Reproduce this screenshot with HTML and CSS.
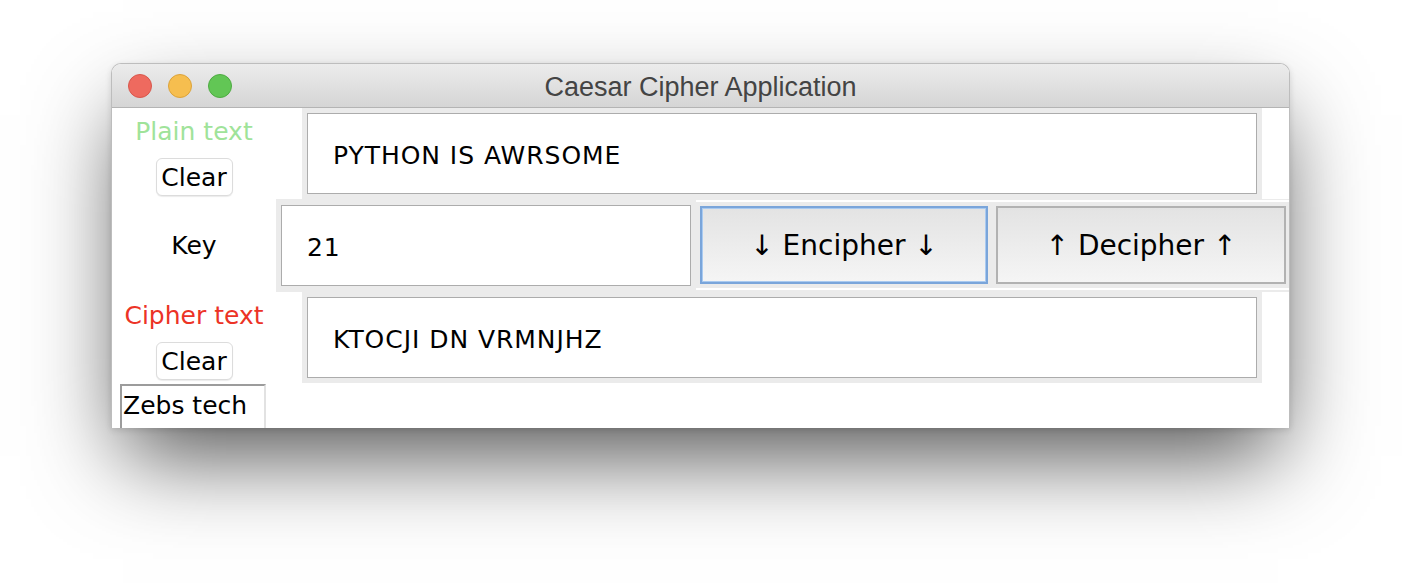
FILE: index.html
```html
<!DOCTYPE html>
<html lang="en">
<head>
    <meta charset="UTF-8">
    <title>Caesar Cipher Application</title>
    <link rel="stylesheet" href="styles.css">
</head>
<body>
    <div class="window">
        <!-- thanh tieu de -->
        <div class="titlebar">
            <div class="lights">
                <span class="light red"></span>
                <span class="light yellow"></span>
                <span class="light green"></span>
            </div>
            <div class="title">Caesar Cipher Application</div>
            <div></div>
        </div>

        <div class="content">
            <div class="row">
                <div class="side">
                    <div class="label plain">Plain text</div>
                    <button class="clear">Clear</button>
                </div>
                <div class="frame wide">
                    <div class="entry">PYTHON IS AWRSOME</div>
                </div>
            </div>

            <div class="row">
                <div class="side center">
                    <div class="label">Key</div>
                </div>
                <div class="frame key">
                    <div class="entry">21</div>
                </div>
                <div class="buttons">
                    <div class="buttons-inner">
                        <button class="action focused">↓ Encipher ↓</button>
                        <button class="action">↑ Decipher ↑</button>
                    </div>
                </div>
            </div>

            <div class="row">
                <div class="side">
                    <div class="label cipher">Cipher text</div>
                    <button class="clear">Clear</button>
                </div>
                <div class="frame wide">
                    <div class="entry">KTOCJI DN VRMNJHZ</div>
                </div>
            </div>

            <div class="credit">Zebs tech</div>
        </div>
    </div>
</body>
</html>
```

FILE: styles.css
```css
html, body {
    min-height: 588px;
}
body {
    margin: 0;
    background: #fff;
    font-family: "DejaVu Sans", "Liberation Sans", sans-serif;
    color: #000;
}
.window {
    box-sizing: border-box;
    width: 1179px;
    height: 365px;
    margin: 63px 0 0 111px;
    border: 1px solid #bdbdbd;
    border-bottom: none;
    border-radius: 10px 10px 0 0;
    overflow: hidden;
    background: #fff;
    box-shadow: 0 40px 85px -12px rgba(0, 0, 0, 0.68), 0 2px 6px rgba(0, 0, 0, 0.12);
}
.titlebar {
    height: 43px;
    display: grid;
    grid-template-columns: 1fr auto 1fr;
    align-items: center;
    background: linear-gradient(#ececec, #d5d5d5);
    border-bottom: 1px solid #b4b4b4;
}
.lights {
    display: flex;
    gap: 16px;
    padding: 1px 0 0 16px;
}
.light {
    box-sizing: border-box;
    width: 24px;
    height: 24px;
    border-radius: 50%;
}
.red { background: #ee6a5f; border: 1px solid #d8574c; }
.yellow { background: #f6be4f; border: 1px solid #dca33a; }
.green { background: #62c655; border: 1px solid #4eab42; }
.title {
    font-family: "Liberation Sans", Arial, sans-serif;
    font-size: 27px;
    color: #444;
    padding-top: 3px;
}
.row {
    display: flex;
}
.side {
    width: 164px;
    display: flex;
    flex-direction: column;
    align-items: center;
}
.side.center {
    justify-content: center;
}
.label {
    font-size: 25px;
    line-height: 30px;
    margin-top: 9px;
}
.side.center .label {
    margin-top: 0;
}
.plain { color: #9fe39a; }
.cipher { color: #ec3326; }
.clear {
    box-sizing: border-box;
    width: 77px;
    height: 38px;
    margin-top: 11px;
    padding: 0;
    font-family: inherit;
    font-size: 25px;
    color: #000;
    background: #fff;
    border: 1px solid #dcdcdc;
    border-radius: 6px;
    box-shadow: 0 1px 1px rgba(0, 0, 0, 0.08);
}
.frame {
    background: #ebebeb;
    padding: 5px;
}
.frame.wide {
    width: 950px;
    margin-left: 26px;
}
.frame.key {
    width: 410px;
    padding-top: 6px;
}
.entry {
    box-sizing: border-box;
    height: 81px;
    display: flex;
    align-items: center;
    padding: 3px 0 0 25px;
    background: #fff;
    border: 1px solid #acacac;
    font-size: 25px;
    letter-spacing: 0.95px;
}
.buttons {
    flex: 1;
    background: #ebebeb;
    padding: 1px 0 2px;
}
.buttons-inner {
    display: flex;
    gap: 8px;
    padding: 4px 3px 4px 4px;
    border-top: 2px solid #fff;
    border-bottom: 2px solid #fff;
}
.action {
    box-sizing: border-box;
    height: 78px;
    padding: 1px 0 0;
    font-family: inherit;
    font-size: 28px;
    color: #000;
    background: linear-gradient(#e3e3e3, #f5f5f5);
    border: 2px solid #b2b2b2;
    width: 290px;
}
.action.focused {
    width: 288px;
    border-color: #7aa5da;
    box-shadow: inset 0 0 0 1px #a9caf0;
}
.credit {
    box-sizing: border-box;
    width: 146px;
    height: 46px;
    margin: 1px 0 0 8px;
    padding: 3px 0 0 1px;
    font-size: 25px;
    line-height: 34px;
    border: 2px solid #e2e2e2;
    border-top-color: #9c9c9c;
    border-left-color: #9c9c9c;
}
```
